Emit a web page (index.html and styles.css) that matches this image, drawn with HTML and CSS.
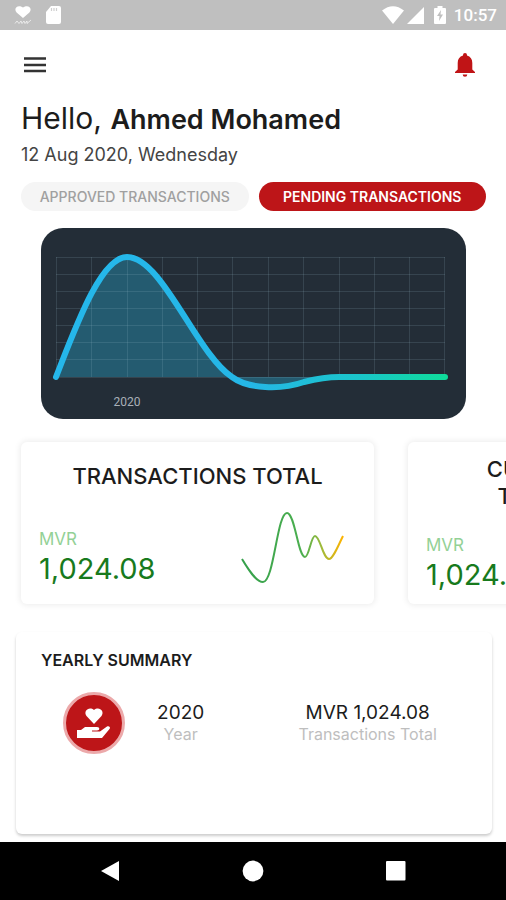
FILE: index.html
```html
<!DOCTYPE html>
<html lang="en">
<head>
<meta charset="utf-8">
<meta name="viewport" content="width=device-width, initial-scale=1">
<title>Transactions</title>
<link rel="stylesheet" href="styles.css">
</head>
<body>
<div class="status-bar">
  <div class="status-group">
    <svg width="18" height="20" viewBox="0 0 18 20" fill="#fff"><path d="M9 13 2.600 7.500C-1 3 4 -1 9 2.500 14-1 19 3 15.400 7.500Z"/><path d="M1 18.500 3 16l2 2.500L7 16l1 2.500 2-2.500 1 2.500 2-2.500v2.500L17 15" fill="none" stroke="#fff" stroke-opacity=".65"/></svg>
    <svg width="16" height="20" viewBox="0 0 16 20"><path d="M6 1h8a2 2 0 0 1 2 2v14a2 2 0 0 1-2 2H3a2 2 0 0 1-2-2V7Z" fill="#fff"/><path d="M6.500 3v3M9 3v3M11.500 3v3" stroke="#d0d0d0" stroke-width="1.200"/></svg>
  </div>
  <div class="status-group status-right">
    <svg width="22" height="18" viewBox="0 0 22 18"><path d="M0 4.500Q11-4 22 4.500L11 18Z" fill="#fff"/></svg>
    <svg width="17" height="18" viewBox="0 0 17 18"><path d="M17 1v17H0Z" fill="#fff"/></svg>
    <svg class="battery" width="12" height="18" viewBox="0 0 12 18"><path d="M3.500 0h5v2H11q1 0 1 1v14q0 1-1 1H1q-1 0-1-1V3q0-1 1-1h2.500Z" fill="#fff"/><path d="m7 4-4 6h2.500L5 15l4-6.500H6.500Z" fill="#bfbfbf"/></svg>
    <span class="clock">10:57</span>
  </div>
</div>
<header class="toolbar">
  <button class="icon-button" aria-label="Menu"><svg width="24" height="16" viewBox="0 0 24 16"><path d="M1 1.500h22M1 8h22M1 14h22" stroke="#333" stroke-width="2.400"/></svg></button>
  <button class="icon-button" aria-label="Notifications"><svg width="20" height="24" viewBox="0 0 20 24" fill="#c01416"><path d="M10 0a2 2 0 0 1 2 2v.6c3.500 1 5.300 3.800 5.300 7.400v6.500L20 19v1H0v-1l2.700-2.500V10C2.700 6.400 4.500 3.600 8 2.600V2a2 2 0 0 1 2-2ZM7.700 21.500h4.600a2.300 2.300 0 0 1-4.600 0Z"/></svg></button>
</header>
<main>
  <section class="greeting">
    <h1>Hello, <strong>Ahmed Mohamed</strong></h1>
    <p>12 Aug 2020, Wednesday</p>
  </section>
  <div class="tabs">
    <button class="tab">APPROVED TRANSACTIONS</button>
    <button class="tab tab-active">PENDING TRANSACTIONS</button>
  </div>
  <figure class="chart">
    <svg viewBox="0 0 425 191" role="img" aria-label="Pending transactions by year">
      <defs><linearGradient id="line" gradientUnits="userSpaceOnUse" x1="15" y1="0" x2="404" y2="0"><stop offset="0" stop-color="#25b7eb"/><stop offset=".5" stop-color="#25b7e7"/><stop offset=".78" stop-color="#1ac5ca"/><stop offset="1" stop-color="#0fdc9b"/></linearGradient></defs>
      <path d="M15 149C35 98 60 29 86 29C121 29 155 125 191 149C207 161 240 162 263 154C275 151 284 149 298 149Z" fill="#24657d" fill-opacity=".82"/>
      <path d="M15 29.500h389M15 46.500h389M15 63.500h389M15 80.500h389M15 97.500h389M15 114.500h389M15 131.500h389M15 149.500h389M15.500 29v120M50.500 29v120M86.500 29v120M121.500 29v120M156.500 29v120M191.500 29v120M227.500 29v120M262.500 29v120M298.500 29v120M333.500 29v120M368.500 29v120M403.500 29v120" stroke="#9dc0cb" stroke-opacity=".16" fill="none"/>
      <path d="M15 149C35 98 60 29 86 29C121 29 155 125 191 149C207 161 240 162 263 154C275 151 284 149 298 149H404" fill="none" stroke="url(#line)" stroke-width="6" stroke-linecap="round"/>
      <text class="axis-label" x="86" y="178" text-anchor="middle">2020</text>
    </svg>
  </figure>
  <section class="totals">
    <article class="total-card">
      <h2>TRANSACTIONS TOTAL</h2>
      <div class="total-row">
        <div class="amount"><span class="currency">MVR</span><span class="value">1,024.08</span></div>
        <svg class="sparkline" width="104" height="72" viewBox="0 0 104 72"><defs><linearGradient id="spark"><stop offset="0" stop-color="#35a04b"/><stop offset=".6" stop-color="#4caf50"/><stop offset=".78" stop-color="#9cba3c"/><stop offset="1" stop-color="#ffb300"/></linearGradient></defs><path d="M2 47C8 57 16 70 23 70C34 70 37 1 47 1C55 1 58 45 65 45C69 45 71 24 75 24C80 24 83 47 89 47C93 47 98 34 103 24" fill="none" stroke="url(#spark)" stroke-width="2"/></svg>
      </div>
    </article>
    <article class="total-card">
      <h2>CURRENT MONTH<br>TRANSACTIONS</h2>
      <div class="total-row">
        <div class="amount"><span class="currency">MVR</span><span class="value">1,024.08</span></div>
      </div>
    </article>
  </section>
  <section class="summary">
    <h3>YEARLY SUMMARY</h3>
    <div class="summary-row">
      <span class="badge"><svg width="36" height="36" viewBox="0 0 36 36" fill="#fff"><path d="M18 19 10.500 11C7 6 13 1 18 5 23 1 29 6 25.500 11Z"/><path d="M1 25h4l4-3h12c3 0 3 3.500 0 3.500h-5v1h8l7-5c2-1 4 1 2.500 2.500L26 33H1Z"/></svg></span>
      <div class="cell"><span class="cell-value">2020</span><span class="cell-label">Year</span></div>
      <div class="cell cell-wide"><span class="cell-value">MVR 1,024.08</span><span class="cell-label">Transactions Total</span></div>
    </div>
  </section>
</main>
<nav class="system-nav">
  <button class="icon-button" aria-label="Back"><svg width="20" height="22" viewBox="0 0 20 22"><path d="M19 1v20L1 11Z" fill="#fff"/></svg></button>
  <button class="icon-button" aria-label="Home"><svg width="22" height="22" viewBox="0 0 22 22"><circle cx="11" cy="11" r="10.400" fill="#fff"/></svg></button>
  <button class="icon-button" aria-label="Recent apps"><svg width="20" height="20" viewBox="0 0 20 20"><rect width="19.500" height="19.500" rx="1" fill="#fff"/></svg></button>
</nav>
</body>
</html>
```
FILE: styles.css
```css
* { box-sizing: border-box; }
body {
  margin: 0;
  min-height: 100vh;
  display: flex;
  flex-direction: column;
  overflow-x: hidden;
  background: #fff;
  color: #1c1c1c;
  font-family: Inter, "Liberation Sans", sans-serif;
}
svg { display: block; }
h1, h2, h3, p, figure { margin: 0; }
button { font-family: inherit; border: 0; padding: 0; }
.icon-button { background: none; }

.status-bar {
  height: 30px;
  padding: 0 9px 0 14px;
  display: flex;
  align-items: center;
  justify-content: space-between;
  background: #bfbfbf;
}
.status-group { display: flex; align-items: center; gap: 13px; }
.status-right { gap: 3px; }
.battery { margin: 0 5px 0 7px; }
.clock { color: #fff; font: 500 17px/30px Roboto, sans-serif; }

.toolbar {
  height: 69px;
  padding: 0 31px 0 23px;
  display: flex;
  align-items: center;
  justify-content: space-between;
}

main { flex: 1; display: flex; flex-direction: column; }
.greeting { padding: 0 21px; }
h1 { font-size: 30px; line-height: 38px; font-weight: 400; }
h1 strong { font-size: 27px; font-weight: 600; }
.greeting p { font-size: 18px; line-height: 32px; color: #444; }

.tabs { display: flex; gap: 10px; padding: 11px 20px 0 21px; }
.tab {
  flex: 1;
  height: 29px;
  border-radius: 15px;
  background: #f5f5f5;
  color: #a0a0a0;
  font-size: 14px;
  font-weight: 500;
  white-space: nowrap;
}
.tab-active { background: #bd1518; color: #fff; font-weight: 600; }

.chart {
  margin: 17px 40px 0 41px;
  border-radius: 22px;
  background: #232d37;
}
.chart svg { width: 100%; }
.axis-label { fill: #a9b0b8; font: 400 12px Roboto, sans-serif; }

.totals { display: flex; gap: 34px; padding: 23px 21px 28px; overflow: hidden; }
.total-card {
  flex: 0 0 353px;
  height: 162px;
  padding: 0 18px;
  display: flex;
  flex-direction: column;
  justify-content: space-around;
  border-radius: 6px;
  box-shadow: 0 0 6px 1px #ececec;
}
h2 { font-size: 22px; line-height: 27px; font-weight: 500; text-align: center; }
.total-row { display: flex; justify-content: space-between; align-items: flex-end; }
.amount { display: flex; flex-direction: column; gap: 6px; }
.currency { font-size: 17px; line-height: 16px; color: #93d196; }
.value { font-size: 29px; line-height: 31px; color: #187a1d; }
.sparkline { margin: -21px 12px 0 0; }

.summary {
  flex: 1;
  margin: 0 14px 8px 16px;
  padding: 18px 13px 18px 25px;
  border-radius: 6px;
  box-shadow: 0 2px 3px #ccc;
}
h3 { font-size: 16px; line-height: 20px; font-weight: 600; }
.summary-row { display: flex; align-items: center; padding: 22px 0 0 22px; }
.badge {
  width: 62px;
  height: 62px;
  display: grid;
  place-items: center;
  border: 3px solid #eca9aa;
  border-radius: 50%;
  background: #bd1518;
}
.cell { flex: 1; display: flex; flex-direction: column; align-items: center; }
.cell-wide { flex: 2; padding-left: 20px; }
.cell-value { font-size: 19px; line-height: 22px; }
.cell-label { font-size: 16px; line-height: 20px; color: #bebebe; }

.system-nav {
  height: 58px;
  display: flex;
  justify-content: center;
  align-items: center;
  gap: 122px;
  background: #000;
}
```
